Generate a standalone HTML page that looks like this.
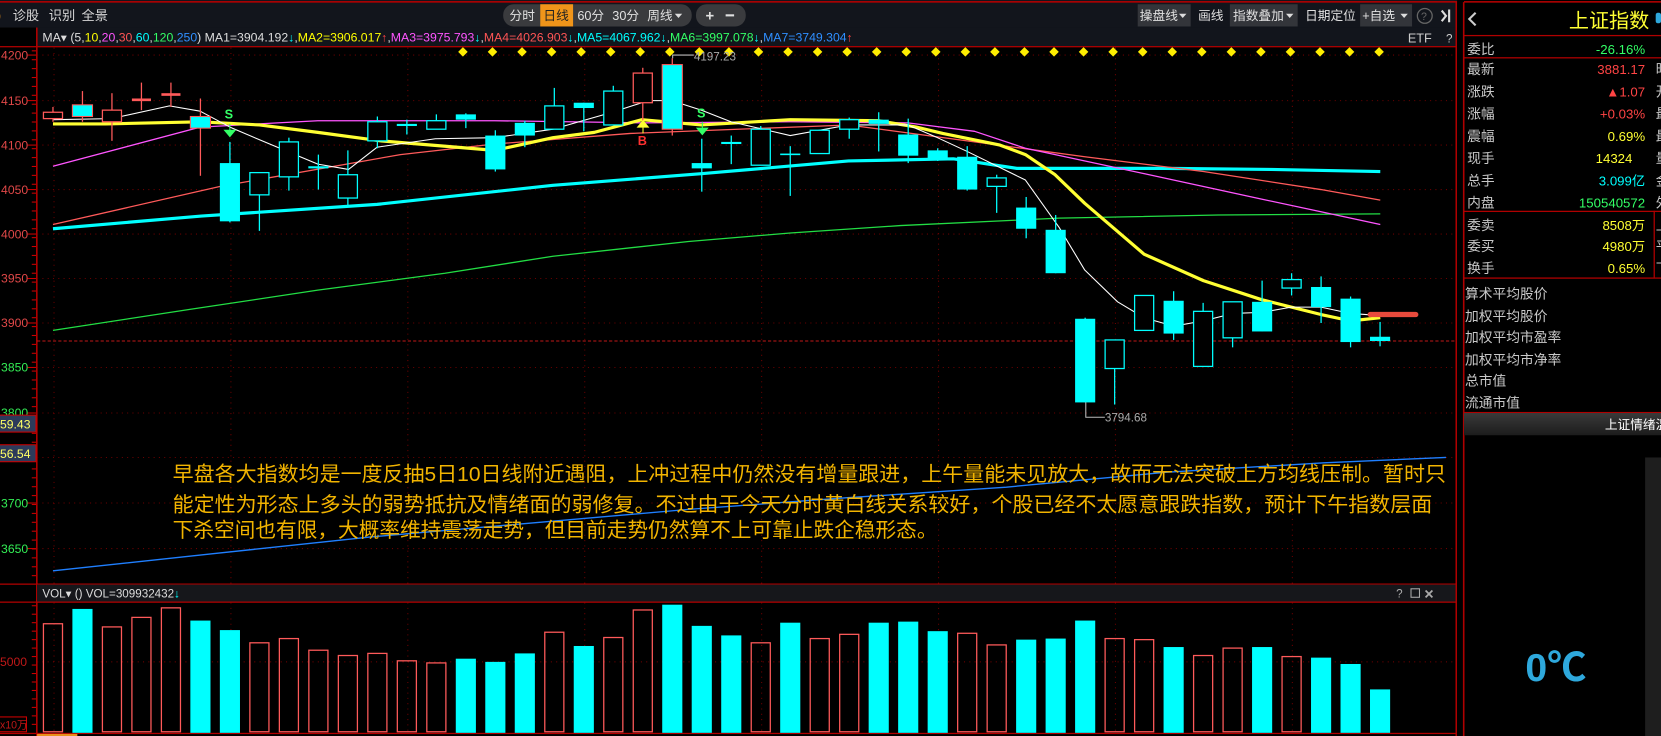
<!DOCTYPE html>
<html><head><meta charset="utf-8">
<style>
html,body{margin:0;padding:0;background:#000;overflow:hidden;}
svg{display:block;}
text{font-family:"Liberation Sans","Noto Sans CJK SC",sans-serif;}
</style></head>
<body>
<svg id="s" width="1661" height="736" viewBox="0 0 1568 695" preserveAspectRatio="none" xmlns="http://www.w3.org/2000/svg">
<rect x="0" y="0" width="1568" height="695" fill="#000"/>
<rect x="0" y="0" width="1378" height="26" fill="#12151c"/>
<rect x="0" y="1" width="1378" height="1.5" fill="#b00000"/>
<text x="-3" y="19" font-size="12" fill="#e8901a">)</text>
<text x="12" y="19" font-size="12.5" fill="#d8d8d8">诊股</text>
<text x="46" y="19" font-size="12.5" fill="#d8d8d8">识别</text>
<text x="77" y="19" font-size="12.5" fill="#d8d8d8">全景</text>
<rect x="475" y="4" width="178" height="21" rx="10" fill="#3a3b3e"/>
<rect x="510" y="4" width="31" height="21" fill="#f0951a"/>
<text x="481" y="19" font-size="12" fill="#e0e0e0">分时</text>
<text x="513" y="19" font-size="12" fill="#222">日线</text>
<text x="545" y="19" font-size="12" fill="#e0e0e0">60分</text>
<text x="578" y="19" font-size="12" fill="#e0e0e0">30分</text>
<text x="611" y="19" font-size="12" fill="#e0e0e0">周线</text>
<path d="M637 13 h7 l-3.5 4z" fill="#ddd"/>
<rect x="657" y="4" width="47" height="21" rx="10" fill="#3a3b3e"/>
<text x="666" y="19.5" font-size="14" font-weight="bold" fill="#e0e0e0">+</text>
<rect x="685" y="13.5" width="8" height="2" fill="#e0e0e0"/>
<rect x="1074" y="4" width="50" height="21" fill="#33353a"/>
<text x="1076" y="19" font-size="12" fill="#e0e0e0">操盘线</text>
<path d="M1113 13 h7 l-3.5 4z" fill="#ddd"/>
<text x="1131" y="19" font-size="12" fill="#e0e0e0">画线</text>
<rect x="1161" y="4" width="64" height="21" fill="#33353a"/>
<text x="1164" y="19" font-size="12" fill="#e0e0e0">指数叠加</text>
<path d="M1214 13 h7 l-3.5 4z" fill="#ddd"/>
<text x="1232" y="19" font-size="12" fill="#e0e0e0">日期定位</text>
<rect x="1284" y="4" width="49" height="21" fill="#33353a"/>
<text x="1286" y="19" font-size="12" fill="#e0e0e0">+自选</text>
<path d="M1322 13 h7 l-3.5 4z" fill="#ddd"/>
<circle cx="1345" cy="15" r="7" fill="none" stroke="#666" stroke-width="1.2"/>
<text x="1341.5" y="19" font-size="10" fill="#666">?</text>
<path d="M1361 10 l4 5 l-4 5 M1368 9 v12" stroke="#ddd" stroke-width="2" fill="none"/>
<rect x="1374" y="2" width="1.5" height="693" fill="#b00000"/>
<rect x="35" y="26" width="1339" height="18" fill="#12151c"/>
<rect x="34" y="26" width="1.5" height="669" fill="#b00000"/>
<rect x="0" y="43.5" width="1375" height="1.2" fill="#b00000"/>
<text x="40" y="39" font-size="11" textLength="765" lengthAdjust="spacingAndGlyphs"><tspan fill="#ddd">MA▾ (5,</tspan><tspan fill="#ffff00">10</tspan><tspan fill="#ddd">,</tspan><tspan fill="#ff55ff">20</tspan><tspan fill="#ddd">,</tspan><tspan fill="#ff5555">30</tspan><tspan fill="#ddd">,</tspan><tspan fill="#00ffff">60</tspan><tspan fill="#ddd">,</tspan><tspan fill="#33ff66">120</tspan><tspan fill="#ddd">,</tspan><tspan fill="#2f8fff">250</tspan><tspan fill="#ddd">)  MA1=3904.192</tspan><tspan fill="#00ffff">↓</tspan><tspan fill="#ddd">,</tspan><tspan fill="#ffff00">MA2=3906.017</tspan><tspan fill="#ff4444">↑</tspan><tspan fill="#ddd">,</tspan><tspan fill="#ff55ff">MA3=3975.793</tspan><tspan fill="#00ffff">↓</tspan><tspan fill="#ddd">,</tspan><tspan fill="#ff5555">MA4=4026.903</tspan><tspan fill="#00ffff">↓</tspan><tspan fill="#ddd">,</tspan><tspan fill="#00ffff">MA5=4067.962↓</tspan><tspan fill="#ddd">,</tspan><tspan fill="#33ff66">MA6=3997.078</tspan><tspan fill="#00ffff">↓</tspan><tspan fill="#ddd">,</tspan><tspan fill="#2f8fff">MA7=3749.304</tspan><tspan fill="#ff4444">↑</tspan></text>
<text x="1329" y="40" font-size="12" fill="#ccc">ETF</text>
<text x="1365" y="40" font-size="11" fill="#ccc">?</text>
<g id="grid"></g>
<g id="ylab" font-size="11.5"></g>
<line x1="35" y1="322" x2="1374" y2="322" stroke="#c01818" stroke-width="1" stroke-dasharray="3,2"/>
<rect x="-1" y="392" width="35" height="16" fill="#2c3a5a" stroke="#c00" stroke-width="1"/>
<text x="0" y="404.5" font-size="11.5" fill="#ffff66">59.43</text>
<rect x="-1" y="420" width="35" height="16" fill="#2c3a5a" stroke="#c00" stroke-width="1"/>
<text x="0" y="432.5" font-size="11.5" fill="#ffff66">56.54</text>
<g id="lines" fill="none"></g>
<g id="candles"></g>
<g id="dia"></g>
<path d="M635 55 V52 H655" stroke="#bbb" fill="none"/>
<text x="655" y="57" font-size="11" fill="#aaa">4197.23</text>
<path d="M1025 380 V394 H1043" stroke="#bbb" fill="none"/>
<text x="1043" y="398" font-size="11" fill="#aaa">3794.68</text>
<text x="212" y="112" font-size="12" font-weight="bold" fill="#33ff66">S</text>
<path d="M217 117 v6 M212 123 h10 l-5 6z" stroke="#33ff66" fill="#33ff66"/>
<text x="658" y="111" font-size="12" font-weight="bold" fill="#33ff66">S</text>
<path d="M663 115 v6 M658 121 h10 l-5 6z" stroke="#33ff66" fill="#33ff66"/>
<path d="M602 120 h10 l-5 -6z M607 120 v6" stroke="#ffff33" fill="#ffff33"/>
<text x="602" y="137" font-size="12" font-weight="bold" fill="#ff3030">B</text>
<rect x="1291" y="294.5" width="48" height="5" rx="2.5" fill="#e84a3c"/>
<g font-size="19.5" fill="#f2b400">
<text x="163" y="454" textLength="1202" lengthAdjust="spacingAndGlyphs">早盘各大指数均是一度反抽5日10日线附近遇阻，上冲过程中仍然没有增量跟进，上午量能未见放大，故而无法突破上方均线压制。暂时只</text>
<text x="163" y="483" textLength="1189" lengthAdjust="spacingAndGlyphs">能定性为形态上多头的弱势抵抗及情绪面的弱修复。不过由于今天分时黄白线关系较好，个股已经不太愿意跟跌指数，预计下午指数层面</text>
<text x="163" y="507" textLength="722" lengthAdjust="spacingAndGlyphs">下杀空间也有限，大概率维持震荡走势，但目前走势仍然算不上可靠止跌企稳形态。</text>
</g>
<rect x="0" y="551" width="1375" height="1.2" fill="#b00000"/>
<rect x="35" y="552" width="1339" height="16" fill="#16171b"/>
<rect x="0" y="568" width="1375" height="1.2" fill="#b00000"/>
<text x="40" y="564" font-size="11" fill="#ddd">VOL▾  ()  VOL=309932432<tspan fill="#00ffff">↓</tspan></text>
<text x="1318" y="564" font-size="11" fill="#aaa">?</text>
<rect x="1332" y="556" width="8" height="8" fill="none" stroke="#aaa"/>
<text x="1344" y="565" font-size="12" font-weight="bold" fill="#aaa">✕</text>
<line x1="35" y1="625" x2="1374" y2="625" stroke="#700" stroke-dasharray="1,4"/>
<text x="0" y="629" font-size="11.5" fill="#c01818">5000</text>
<rect x="-1" y="677" width="26" height="14" fill="none" stroke="#c00"/>
<text x="0" y="688" font-size="10" fill="#c01818">x10万</text>
<rect x="0" y="692" width="1375" height="1.2" fill="#b00000"/>
<rect x="35" y="693" width="38" height="2" fill="#e8901a"/>
<g id="vol"></g>
<rect x="1375.5" y="0" width="5.5" height="695" fill="#000"/>
<rect x="1381" y="2" width="1.5" height="693" fill="#b00000"/>
<rect x="1382" y="1" width="186" height="1.5" fill="#b00000"/>
<path d="M1393 12 l-6 6 l6 6" stroke="#ccc" stroke-width="2" fill="none"/>
<text x="1481" y="26" font-size="19" fill="#ffff33">上证指数</text>
<rect x="1563" y="12" width="5" height="10" rx="2" fill="#2ea8dc"/>
<rect x="1382" y="33" width="186" height="1.2" fill="#b00000"/>
<rect x="1382" y="54" width="186" height="1.2" fill="#b00000"/>
<rect x="1382" y="199" width="186" height="1.2" fill="#b00000"/>
<rect x="1382" y="262" width="186" height="1.2" fill="#b00000"/>
<rect x="1561" y="199" width="1.2" height="63" fill="#b00000"/>
<g font-size="13" fill="#c8c8c8">
<text x="1385" y="51">委比</text>
<text x="1385" y="70">最新</text><text x="1385" y="91">涨跌</text><text x="1385" y="112">涨幅</text><text x="1385" y="133">震幅</text><text x="1385" y="154">现手</text><text x="1385" y="175">总手</text><text x="1385" y="196">内盘</text>
<text x="1385" y="217">委卖</text><text x="1385" y="237">委买</text><text x="1385" y="258">换手</text>
<text x="1563" y="70">昨</text><text x="1563" y="91">开</text><text x="1563" y="112">最</text><text x="1563" y="133">最</text><text x="1563" y="154">量</text><text x="1563" y="175">金</text><text x="1563" y="196">外</text>
<text x="1563" y="217">上</text><text x="1563" y="237">平</text><text x="1563" y="258">下</text>
<text x="1383" y="282">算术平均股价</text><text x="1383" y="303">加权平均股价</text><text x="1383" y="323">加权平均市盈率</text><text x="1383" y="344">加权平均市净率</text><text x="1383" y="364">总市值</text><text x="1383" y="385">流通市值</text>
</g>
<g font-size="12.5" text-anchor="end">
<text x="1553" y="51" fill="#33ff66">-26.16%</text>
<text x="1553" y="70" fill="#ff4444">3881.17</text>
<text x="1553" y="91" fill="#ff4444">▲1.07</text>
<text x="1553" y="112" fill="#ff4444">+0.03%</text>
<text x="1553" y="133" fill="#ffff33">0.69%</text>
<text x="1541" y="154" fill="#ffff33">14324</text>
<text x="1553" y="175" fill="#00ffff">3.099亿</text>
<text x="1553" y="196" fill="#33ff66">150540572</text>
<text x="1553" y="217" fill="#ffff33">8508万</text>
<text x="1553" y="237" fill="#ffff33">4980万</text>
<text x="1553" y="258" fill="#ffff33">0.65%</text>
</g>
<rect x="1382" y="389" width="186" height="1.2" fill="#b00000"/>
<defs><linearGradient id="hg" x1="0" y1="0" x2="0" y2="1"><stop offset="0" stop-color="#3a3a3a"/><stop offset="1" stop-color="#1c1c1c"/></linearGradient></defs>
<rect x="1382" y="390" width="186" height="21" fill="url(#hg)"/>
<text x="1515" y="405" font-size="12" fill="#fff">上证情绪温</text>
<rect x="1553" y="432" width="15" height="263" fill="#1e1e1e"/>
<text x="1440" y="643" font-size="37" font-weight="bold" fill="#2ea8dc">0℃</text>
</svg>
<script>
var NS="http://www.w3.org/2000/svg";
function el(p,t,a){var e=document.createElementNS(NS,t);for(var k in a)e.setAttribute(k,a[k]);p.appendChild(e);return e;}
var g=document.getElementById('grid');
var ys=[[4200,52],[4150,95],[4100,137],[4050,179],[4000,221],[3950,263],[3900,305],[3850,347],[3800,390],[3750,432],[3700,475],[3650,518]];
ys.forEach(function(a){el(g,'line',{x1:35,y1:a[1],x2:1374,y2:a[1],stroke:'#6a0000','stroke-dasharray':'1,4'});});
for(var x=51;x<1374;x+=167){el(g,'line',{x1:x,y1:45,x2:x,y2:551,stroke:'#6a0000','stroke-dasharray':'1,4'});el(g,'line',{x1:x,y1:569,x2:x,y2:692,stroke:'#6a0000','stroke-dasharray':'1,4'});}
for(var y=48;y<550;y+=8.4){el(g,'line',{x1:30,y1:y,x2:34,y2:y,stroke:'#c00'});}
for(var y=572;y<690;y+=8){el(g,'line',{x1:30,y1:y,x2:34,y2:y,stroke:'#c00'});}
var yl=document.getElementById('ylab');
ys.forEach(function(a){if(a[0]==3750)return;var t=el(yl,'text',{x:1,y:a[1]+4,fill:a[0]>=3900?'#e04848':'#33ee55'});t.textContent=a[0];el(yl,'line',{x1:26,y1:a[1],x2:34,y2:a[1],stroke:'#c00'});});
var L=document.getElementById('lines');
function pl(pts,c,w){el(L,'polyline',{points:pts,stroke:c,'stroke-width':w,fill:'none','stroke-linejoin':'round'});}
pl("50,539 200,523 350,507 500,494 650,481 800,470 950,460 1100,446 1250,437 1365,432","#1f7fff",1.3);
pl("50,312 180,292 300,274 420,258 522,242 650,228 746,220 850,213 1000,206 1150,203 1303,202","#22dd44",1.2);
pl("50,216 190,204 356,193 522,175 662,164 801,152 900,150 960,159 1100,159 1200,160 1303,162","#00ffff",3);
pl("50,212 208,176 378,146 467,136 595,126 801,118 913,133 1024,148 1136,162 1247,179 1303,189","#ff5a5a",1.2);
pl("50,157 189,120 300,114 467,114 606,116 746,115 857,116 920,124 968,140 1080,164 1191,188 1247,200 1303,212","#ff55ff",1.2);
pl("50,117 100,117 189,115 245,118 300,125 359,133 467,142 522,130 561,125 606,113 662,118 746,113 829,114 865,120 890,126 944,137 968,146 996,165 1024,192 1080,240 1136,265 1191,283 1247,297 1275,303 1303,300","#ffff33",3);
pl("50,113 105,112 160,100 189,105 217,120 245,132 300,155 329,160 356,139 411,131 467,130 522,122 578,106 612,95 634,95 662,104 690,115 746,128 801,118 857,118 885,130 913,143 968,170 1000,215 1024,255 1055,285 1080,300 1108,308 1136,303 1164,296 1191,295 1219,290 1247,290 1275,296 1303,298","#fff",1);
var C=[[0,106,112,101,115,'r'],[1,99,110,86,115,'rf'],[2,104,115,88,133,'r'],[3,94,94.5,78,104,'x'],[4,89,89.5,78,101,'x'],[5,110,121,93,166,'rf'],[6,154,209,134,210,'f'],[7,163,184,163,218,'h'],[8,134,167,130,180,'h'],[9,157,159,146,179,'f'],[10,165,187,142,194,'h'],[11,115,133,110,140,'h'],[12,117,119,113,127,'f'],[13,114,122,108,122,'h'],[14,108,113,107,121,'f'],[15,128,160,123,162,'f'],[16,116,128,114,139,'f'],[17,100,122,83,122,'h'],[18,97,102,97,124,'f'],[19,86,118,81,118,'h'],[20,69,97,64,118,'r'],[21,61,122,55,128,'rf'],[22,154,159,131,181,'f'],[23,134,136,128,155,'f'],[24,122,156,119,156,'h'],[25,145,146,138,185,'f'],[26,123,145,123,145,'h'],[27,113,122,111,131,'h'],[28,113,117,106,143,'f'],[29,127,147,112,154,'f'],[30,142,150,140,152,'f'],[31,148,179,138,180,'f'],[32,168,176,165,201,'h'],[33,196,216,186,225,'f'],[34,217,258,203,258,'f'],[35,301,380,300,380,'f'],[36,321,348,321,382,'h'],[37,279,312,279,312,'h'],[38,284,315,275,321,'f'],[39,294,346,286,346,'h'],[40,285,319,285,328,'h'],[41,285,313,265,313,'f'],[42,264,272,258,279,'h'],[43,271,290,261,305,'f'],[44,282,323,280,328,'f'],[45,318,322,304,327,'f']];
var K=document.getElementById('candles');
C.forEach(function(c){var x=50+27.84*c[0];var col=(c[5]=='r'||c[5]=='x')?'#ff5a5a':'#00ffff';var wc=(c[5]=='rf'||c[5]=='r'||c[5]=='x')?'#ff5a5a':'#00ffff';
el(K,'line',{x1:x,y1:c[3],x2:x,y2:c[4],stroke:wc,'stroke-width':1.2});
var h=Math.max(c[2]-c[1],1.5);
if(c[5]=='x'){el(K,'rect',{x:x-9,y:c[1]-1,width:18,height:2.5,fill:'#ff5a5a'});return;}
if(c[5]=='f'){el(K,'rect',{x:x-9.5,y:c[1],width:19,height:h,fill:'#00ffff'});return;}
if(c[5]=='rf'){el(K,'rect',{x:x-9.5,y:c[1],width:19,height:h,fill:'#00ffff',stroke:'#ff5a5a','stroke-width':1});return;}
el(K,'rect',{x:x-9,y:c[1],width:18,height:h,fill:'#000',stroke:col,'stroke-width':1.2});});
var D=document.getElementById('dia');
for(var i=0;i<32;i++){var x=437+27.9*i;el(D,'path',{d:'M'+x+' 44.5 l4.5 4.5 l-4.5 4.5 l-4.5 -4.5z',fill:'#ffee00'});}
var V=[589,575,592,583,574,586,595,607,603,614,619,617,624,626,622,625,617,597,610,602,576,571,591,600,607,588,603,599,588,587,596,598,609,604,603,586,603,604,611,619,612,611,620,621,627,651];
var VC="rcrrrccrrrrrrrcccrcrrcccrcrrcccrrcccrrcrrcrccc";
var VG=document.getElementById('vol');
V.forEach(function(t,i){var x=50+27.84*i;if(VC[i]=='c')el(VG,'rect',{x:x-9.5,y:t,width:19,height:692-t,fill:'#00ffff'});else el(VG,'rect',{x:x-9,y:t,width:18,height:691-t,fill:'none',stroke:'#ff5a5a','stroke-width':1.2});});
</script>
</body></html>
